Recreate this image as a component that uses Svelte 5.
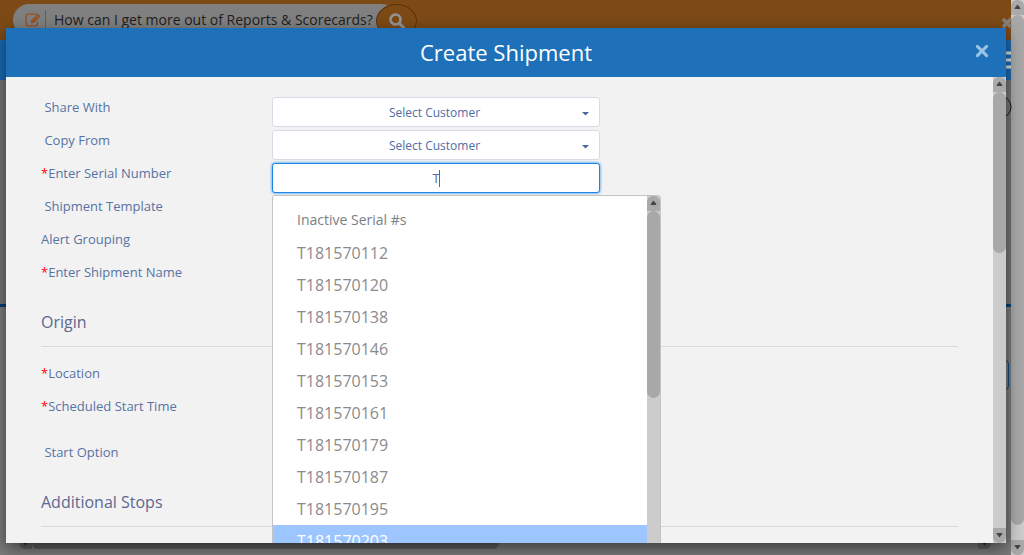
<script>
  const serials = [
    'T181570112', 'T181570120', 'T181570138', 'T181570146', 'T181570153',
    'T181570161', 'T181570179', 'T181570187', 'T181570195', 'T181570203'
  ];
  const active = 'T181570203';
  let serial = $state('T');
</script>

{#snippet arrow(dir)}
  <svg class="arrow" viewBox="0 0 13 15" aria-hidden="true">
    {#if dir === 'up'}
      <path d="M6.5 4.5 9.5 8.2 9 9H4L3.5 8.2Z" />
    {:else}
      <path d="M6.5 9.5 3.5 5.8 4 5H9L9.5 5.8Z" />
    {/if}
  </svg>
{/snippet}

{#snippet caret()}
  <svg class="caret" viewBox="0 0 7 4" aria-hidden="true"><path d="M0 0H7L3.5 3.5Z" /></svg>
{/snippet}

<div class="page">
  <div class="site">
    <div class="banner">
      <div class="tip">
        <svg class="edit" viewBox="0 0 16 14" aria-hidden="true">
          <path d="M11.5 1.2H3.2A2.2 2.2 0 0 0 1 3.4V10.6A2.2 2.2 0 0 0 3.2 12.8H10.3A2.2 2.2 0 0 0 12.5 10.6V8.6" fill="none" stroke="currentColor" stroke-width="1.3" />
          <path d="M12.8.4 15.6 3.200 8.8 10H6V7.200Z" fill="currentColor" />
          <path d="M8 7.4 12.2 3.2M11 2.2 13.8 5" stroke="#808080" stroke-width=".6" />
        </svg>
        <span class="question">How can I get more out of Reports &amp; Scorecards?</span>
      </div>
      <button class="search" aria-label="Search">
        <svg viewBox="0 0 16 16"><circle cx="6.5" cy="6.5" r="5" fill="none" stroke="currentColor" stroke-width="2.6" /><path d="M10.3 10.3 14.5 14.5" stroke="currentColor" stroke-width="3" stroke-linecap="round" /></svg>
      </button>
      <button class="dismiss" aria-label="Dismiss">
        <svg viewBox="0 0 12 12"><path d="M2 2 10 10M10 2 2 10" stroke="currentColor" stroke-width="3.4" /></svg>
      </button>
    </div>
    <div class="nav">
      <svg class="menu" viewBox="0 0 12 18" aria-hidden="true"><path d="M0 2H12M0 9H12M0 16H12" stroke="#dedede" stroke-width="3" /></svg>
    </div>
    <div class="map">
      <svg class="pin" viewBox="0 0 24 24" aria-hidden="true"><circle cx="12" cy="12" r="11" fill="none" stroke="#151515" /></svg>
    </div>
    <div class="panel">
      <div class="box"></div>
    </div>
    <div class="hbar">{@render arrow('down')}<div class="hthumb"></div><div class="track"></div>{@render arrow('down')}</div>
  </div>
  <div class="scroll outer">
    {@render arrow('up')}
    <div class="track"><div class="thumb" style="height: 100%"></div></div>
    {@render arrow('down')}
  </div>

  <div class="modal" role="dialog" aria-labelledby="title">
    <header>
      <h1 id="title">Create Shipment</h1>
      <button class="close" aria-label="Close">
        <svg viewBox="0 0 12 12"><path d="M2 2 10 10M10 2 2 10" stroke="currentColor" stroke-width="2.6" stroke-linecap="round" /></svg>
      </button>
    </header>
    <div class="body">
      <form>
        <div class="row">
          <label for="share">&nbsp;Share With</label>
          <div class="field"><select id="share"><option>Select Customer</option></select>{@render caret()}</div>
        </div>
        <div class="row">
          <label for="copy">&nbsp;Copy From</label>
          <div class="field"><select id="copy"><option>Select Customer</option></select>{@render caret()}</div>
        </div>
        <div class="row">
          <label for="serial"><b>*</b>Enter Serial Number</label>
          <div class="field">
            <input id="serial" class="focused" type="text" autocomplete="off" bind:value={serial} />
            <span class="cursor"></span>
            <div class="dropdown">
              <div class="list">
                <div class="group">Inactive Serial #s</div>
                <ul>
                  {#each serials as s}
                    <li class:active={s === active}>{s}</li>
                  {/each}
                </ul>
              </div>
              <div class="scroll inner">
                {@render arrow('up')}
                <div class="track"><div class="thumb" style="height: 52%"></div></div>
              </div>
            </div>
          </div>
        </div>
        <div class="row">
          <label for="template">&nbsp;Shipment Template</label>
          <div class="field"><input id="template" type="text" /></div>
        </div>
        <div class="row">
          <label for="alert">Alert Grouping</label>
          <div class="field"><input id="alert" type="text" /></div>
        </div>
        <div class="row">
          <label for="name"><b>*</b>Enter Shipment Name</label>
          <div class="field"><input id="name" type="text" /></div>
        </div>

        <h2>Origin</h2>
        <div class="row">
          <label for="location"><b>*</b>Location</label>
          <div class="field"><input id="location" type="text" /></div>
        </div>
        <div class="row">
          <label for="start"><b>*</b>Scheduled Start Time</label>
          <div class="field"><input id="start" type="text" /></div>
        </div>
        <div class="row spaced">
          <label for="option">&nbsp;Start Option</label>
          <div class="field"><input id="option" type="text" /></div>
        </div>

        <h2>Additional Stops</h2>
      </form>
      <div class="scroll side">
        {@render arrow('up')}
        <div class="track"><div class="thumb" style="height: 37%"></div></div>
        {@render arrow('down')}
      </div>
    </div>
  </div>
</div>

<style>
  :global(body) { margin: 0; }
  .page, .page * { box-sizing: border-box; }
  .page {
    position: relative;
    display: flex;
    height: 100vh;
    overflow: hidden;
    font-family: "Open Sans", sans-serif;
    font-size: 13px;
    color: #5873a3;
    background: #7b7b7b;
  }
  button { border: 0; padding: 0; background: none; cursor: pointer; }
  svg { display: block; }

  .site { flex: 1; min-width: 0; display: flex; flex-direction: column; }
  .banner {
    position: relative;
    flex: none;
    display: flex;
    height: 40px;
    padding: 4px 0 0 13px;
    background: #7d4a16;
  }
  .tip {
    display: flex;
    align-items: center;
    width: 384px;
    height: 32px;
    padding-left: 12px;
    border-radius: 16px;
    background: #808080;
  }
  .edit { width: 16px; height: 14px; color: #96501f; }
  .question {
    margin-left: 4px;
    padding-left: 8px;
    border-left: 1px solid #96501f;
    font-size: 14px;
    line-height: 20px;
    color: #1e1e1e;
    white-space: nowrap;
  }
  .search {
    display: grid;
    place-items: center;
    width: 41px;
    height: 34px;
    margin-left: -21px;
    border: 1px solid #5c3408;
    border-radius: 50%;
    background: #7d4a16;
    color: #959595;
  }
  .search svg { width: 16px; height: 16px; }
  .dismiss { position: absolute; right: -2px; top: 17px; color: #85807a; }
  .dismiss svg { width: 12px; height: 12px; }
  .nav { flex: none; display: flex; justify-content: flex-end; height: 40px; padding-top: 11px; background: #1b69b0; }
  .menu { width: 12px; height: 18px; }
  .map { position: relative; flex: none; height: 227px; border-bottom: 3px solid #073e6e; background: #757473; }
  .pin { position: absolute; right: -1px; top: 15px; width: 24px; height: 24px; }
  .panel { flex: 1; padding: 53px 2px 0 20px; background: #7b7b7b; }
  .box { height: 30px; border: 1px solid #0d4a80; border-radius: 4px; }
  .hbar { flex: none; display: flex; height: 13px; margin: 0 20px 6px 19px; border-radius: 6px; overflow: hidden; background: #777; }
  .hbar .arrow { background: #606060; fill: #2a2a2a; }
  .hthumb { width: 48%; border-radius: 6px; background: #5c5c5c; }

  .scroll { flex: none; display: flex; flex-direction: column; width: 13px; background: #ccc; }
  .arrow { flex: none; width: 13px; height: 15px; background: #a9a9a9; fill: #444; }
  .scroll .arrow:first-child { border-radius: 6px 6px 0 0; }
  .scroll .arrow:last-child { border-radius: 0 0 6px 6px; }
  .track { flex: 1; }
  .thumb { border-radius: 7px; background: #a8a8a8; }
  .outer .track { padding-bottom: 15px; }

  .modal {
    position: absolute;
    inset: 28px 18px 12px 6px;
    display: flex;
    flex-direction: column;
    background: #f2f2f2;
    box-shadow: 0 5px 15px rgba(0, 0, 0, 0.5);
  }
  header {
    position: relative;
    flex: none;
    display: flex;
    justify-content: center;
    height: 49px;
    padding-top: 9px;
    background: #1e71b9;
    color: #fff;
  }
  h1 { margin: 0; font-size: 22px; font-weight: 400; line-height: 30px; }
  .close { position: absolute; right: 17px; top: 16px; color: #9bc3e6; }
  .close svg { width: 14px; height: 14px; }
  .body { flex: 1; min-height: 0; display: flex; overflow: hidden; }
  form { flex: 1; min-width: 0; padding: 20px 35px 0; }
  .row { display: grid; grid-template-columns: 231px 328px; height: 33px; }
  label { line-height: 20px; white-space: nowrap; }
  b { font-weight: 400; color: #f00; }
  .field { position: relative; height: 30px; }
  select, input {
    display: block;
    width: 100%;
    height: 30px;
    margin: 0;
    border: 1px solid #d8dbe6;
    border-radius: 3px;
    outline: 0;
    background: #fff;
    color: #4f6ca3;
    font: 13px "Open Sans", sans-serif;
    text-align: center;
  }
  select { appearance: none; padding: 0 13px 0 10px; font-size: 12px; text-align-last: center; }
  .caret { position: absolute; right: 11px; top: 15px; width: 7px; height: 4px; fill: #4a69a3; pointer-events: none; }
  .focused { border-color: #1a86e8; box-shadow: 0 0 3px #1a86e8; }
  .cursor { position: absolute; left: 167px; top: 7px; width: 1px; height: 17px; background: #4a69a3; }
  h2 {
    margin: 14px 0 16px;
    padding-bottom: 11px;
    border-bottom: 1px solid #d9d9d9;
    font-size: 16px;
    font-weight: 400;
    line-height: 26px;
    color: #5c6890;
  }
  .spaced { margin-top: 13px; }

  .dropdown {
    position: absolute;
    z-index: 2;
    left: 0;
    top: 32px;
    display: flex;
    width: 389px;
    height: 376px;
    border: 1px solid #c4c4c4;
    border-radius: 3px;
    overflow: hidden;
    background: #fff;
  }
  .list { flex: 1; overflow: hidden; }
  .group { padding: 14px 24px 7px; font-size: 14px; line-height: 20px; color: #7b8087; }
  ul { margin: 0; padding: 0; list-style: none; }
  li { padding: 0 24px; font-size: 16px; line-height: 32px; color: #8b8b8b; }
  li.active { background: #9dc5ff; color: #fff; }
</style>
